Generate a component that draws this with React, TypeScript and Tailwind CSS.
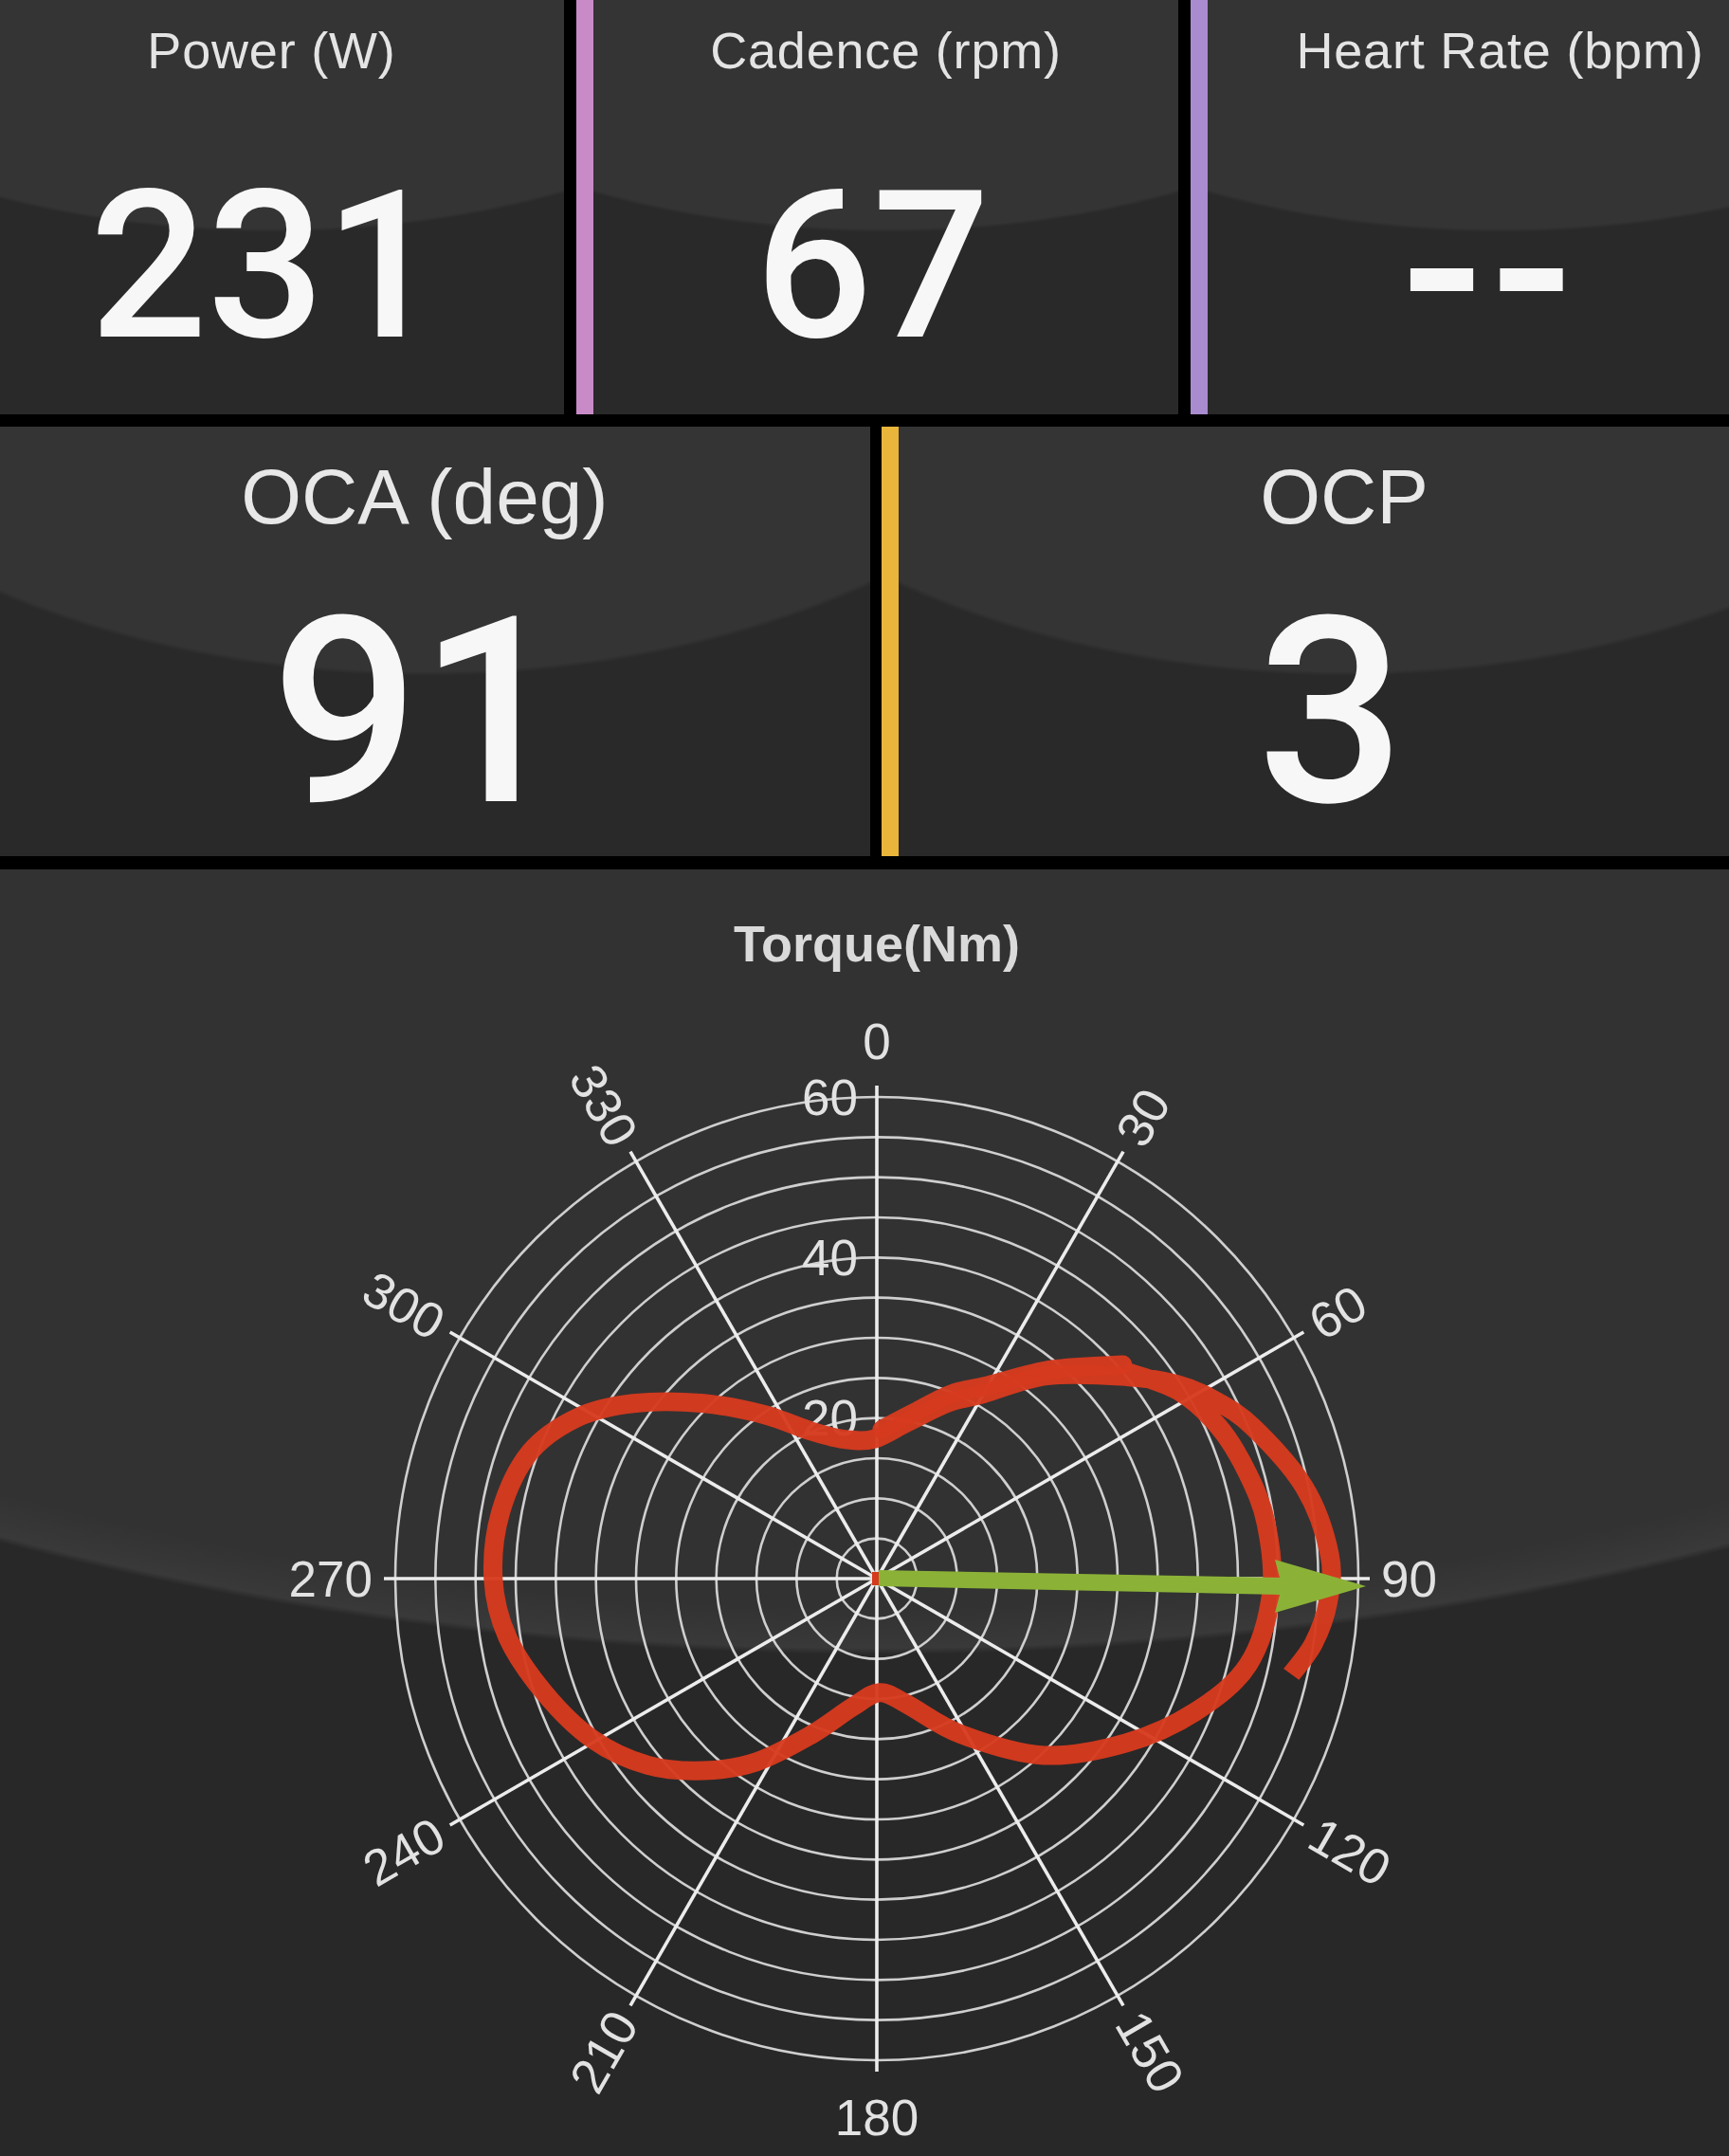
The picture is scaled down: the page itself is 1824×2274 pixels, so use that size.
import React from "react";

const CX = 925;
const CY = 1665;
const R = 508;
const PX = R / 60;

type Pt = [number, number];

function toXY(theta: number, nm: number): Pt {
  const a = (theta * Math.PI) / 180;
  const r = nm * PX;
  return [CX + r * Math.sin(a), CY - r * Math.cos(a)];
}

// catmull-rom through polar samples (deg, Nm)
function smoothPath(samples: Pt[]) {
  const p = samples.map(([t, n]) => toXY(t, n));
  const f = (v: number) => v.toFixed(1);
  let d = `M${f(p[0][0])} ${f(p[0][1])}`;
  for (let i = 0; i < p.length - 1; i++) {
    const p0 = p[i - 1] || p[i];
    const p1 = p[i];
    const p2 = p[i + 1];
    const p3 = p[i + 2] || p2;
    const c1x = p1[0] + (p2[0] - p0[0]) / 6;
    const c1y = p1[1] + (p2[1] - p0[1]) / 6;
    const c2x = p2[0] - (p3[0] - p1[0]) / 6;
    const c2y = p2[1] - (p3[1] - p1[1]) / 6;
    d += ` C${f(c1x)} ${f(c1y)} ${f(c2x)} ${f(c2y)} ${f(p2[0])} ${f(p2[1])}`;
  }
  return d;
}

const trace: Pt[] = [
  [50, 40.2], [58, 44.2], [66, 46.6], [74, 48], [82, 49], [92, 49.2], [103, 47.5],
  [112.7, 43], [123.4, 37.2], [136.6, 30.3], [151.5, 22.1], [166.5, 16.1],
  [178.6, 14.2], [190.8, 16.3], [202.8, 21.1], [213.3, 27.3], [222, 32.2],
  [230.8, 36.8], [240.6, 40.7], [251, 43.8], [261, 46.6], [270, 47.8],
  [280, 47.6], [290, 46], [298.4, 42.3], [305.7, 37.4], [315, 30.9],
  [325.3, 24.9], [336, 20.1], [347, 17.8], [359, 17.4], [11, 19.8],
  [22, 23.6], [30, 26.6], [40, 33], [51, 40], [57, 44.5], [62, 47.5],
  [68, 50.5], [78, 54.5], [87, 56.5], [93, 56.3], [98.5, 55], [103, 53],
];

const thick: Pt[] = [
  [2, 18.6], [12, 21], [22, 24.8], [30, 27.8], [40, 34], [49, 40.6],
];

function PolarChart() {
  const rings = Array.from({ length: 12 }, (_, i) => ((i + 1) * R) / 12);
  const spokes = Array.from({ length: 12 }, (_, i) => i * 30);
  const font = "Liberation Sans, Arial, sans-serif";

  return (
    <svg width={1824} height={1244} viewBox="0 1030 1824 1244" className="block">
      {rings.map((r) => (
        <circle key={r} cx={CX} cy={CY} r={r} fill="none" stroke="#cfcfcf" strokeWidth={2.6} />
      ))}
      {spokes.map((t) => {
        const a = (t * Math.PI) / 180;
        const L = R + 12;
        return (
          <line
            key={t}
            x1={CX}
            y1={CY}
            x2={CX + L * Math.sin(a)}
            y2={CY - L * Math.cos(a)}
            stroke="#ececec"
            strokeWidth={3.6}
          />
        );
      })}
      {[20, 40, 60].map((n) => (
        <text
          key={n}
          x={CX - 20}
          y={CY - n * PX}
          textAnchor="end"
          dominantBaseline="central"
          fontSize={53}
          fontFamily={font}
          fill="#e2e2e2"
        >
          {n}
        </text>
      ))}
      {spokes.map((t) => {
        if (t === 0)
          return (
            <text key={t} x={CX} y={CY - R - 40} textAnchor="middle" fontSize={53} fontFamily={font} fill="#e2e2e2">
              0
            </text>
          );
        if (t === 180)
          return (
            <text key={t} x={CX} y={CY + R + 79} textAnchor="middle" fontSize={53} fontFamily={font} fill="#e2e2e2">
              180
            </text>
          );
        const a = (t * Math.PI) / 180;
        const px = CX + (R + 24) * Math.sin(a);
        const py = CY - (R + 24) * Math.cos(a);
        const rot = t < 180 ? t - 90 : t - 270;
        return (
          <text
            key={t}
            transform={`translate(${px.toFixed(1)} ${py.toFixed(1)}) rotate(${rot})`}
            textAnchor={t < 180 ? "start" : "end"}
            dominantBaseline="central"
            fontSize={53}
            fontFamily={font}
            fill="#e2e2e2"
          >
            {t}
          </text>
        );
      })}
      <path d={smoothPath(trace)} fill="none" stroke="#d63a1e" strokeWidth={20} strokeLinejoin="round" opacity={0.96} />
      <path
        d={smoothPath(thick)}
        fill="none"
        stroke="#d63a1e"
        strokeWidth={20}
        strokeLinejoin="round"
        strokeLinecap="round"
        opacity={0.96}
      />
      <rect x={920} y={1658} width={9} height={14} fill="#d63a1e" />
      <polygon
        points="927,1656 1350,1664 1345,1645 1441,1673 1345,1701 1350,1682 927,1673"
        fill="#8bb237"
      />
    </svg>
  );
}

function TopPanel({ title, value, shift }: { title: string; value: React.ReactNode; shift: string }) {
  return (
    <div className="flex w-[617px] shrink-0 flex-col items-center bg-[radial-gradient(ellipse_700px_400px_at_50%_-155px,#343434_99%,#292929_100%)]">
      <div className="pt-[26px] text-[54px] leading-[54px] tracking-[0.015em] whitespace-nowrap text-[#e4e4e4]">
        {title}
      </div>
      <div
        className={`mt-[92px] font-['Roboto',Arial,sans-serif] text-[218px] leading-[218px] font-medium text-[#f7f7f7] ${shift}`}
      >
        {value}
      </div>
    </div>
  );
}

function MidPanel({ title, value, shift }: { title: string; value: string; shift: string }) {
  return (
    <div className="flex w-[940px] shrink-0 flex-col items-center bg-[radial-gradient(ellipse_800px_500px_at_50%_-237px,#343434_99%,#292929_100%)]">
      <div className="pt-[33px] text-[82px] leading-[82px] whitespace-nowrap text-[#e8e8e8]">{title}</div>
      <div
        className={`mt-[50px] font-['Roboto',Arial,sans-serif] text-[274px] leading-[274px] font-medium text-[#f7f7f7] ${shift}`}
      >
        {value}
      </div>
    </div>
  );
}

export default function App() {
  return (
    <div className="flex h-[2274px] w-[1824px] flex-col overflow-hidden bg-black font-['Liberation_Sans',Arial,sans-serif]">
      <div className="-ml-[22px] flex h-[437px] w-max shrink-0">
        <TopPanel title="Power (W)" value="231" shift="pr-[12px]" />
        <div className="w-[13px] bg-black" />
        <div className="w-[18px] bg-[#c98bc8]" />
        <TopPanel title="Cadence (rpm)" value="67" shift="pr-[28px]" />
        <div className="w-[13px] bg-black" />
        <div className="w-[18px] bg-[#a98bd0]" />
        <TopPanel
          title="Heart Rate (bpm)"
          value={<span className="inline-block translate-y-[6px] scale-x-[1.1] font-bold">--</span>}
          shift="pr-[28px]"
        />
      </div>

      <div className="-ml-[22px] mt-[13px] flex h-[453px] w-max shrink-0">
        <MidPanel title="OCA (deg)" value="91" shift="pr-[12px]" />
        <div className="w-[12px] bg-black" />
        <div className="w-[18px] bg-[#e9b53a]" />
        <MidPanel title="OCP" value="3" shift="pr-[28px]" />
      </div>

      <div className="mt-[14px] flex h-[1357px] shrink-0 flex-col bg-[radial-gradient(ellipse_2500px_1662px_at_925px_-834px,#323232_97%,#393939_99.6%,#282828_100%)]">
        <div className="h-[113px] shrink-0 pl-[26px] pt-[51px] text-center text-[54px] leading-[54px] font-bold text-[#dadada]">
          Torque(Nm)
        </div>
        <PolarChart />
      </div>
    </div>
  );
}
